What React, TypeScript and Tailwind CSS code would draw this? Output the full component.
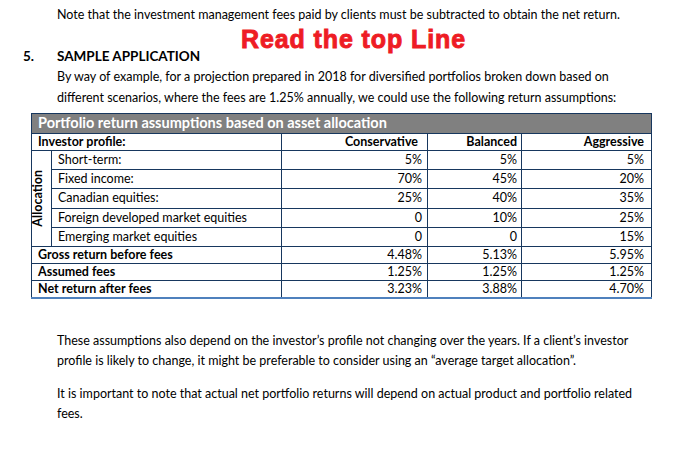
export default function App() {
  const alloc = [
    { label: 'Short-term:', c: '5%', b: '5%', a: '5%', h: 'h-[19px]' },
    { label: 'Fixed income:', c: '70%', b: '45%', a: '20%', h: 'h-[19px]' },
    { label: 'Canadian equities:', c: '25%', b: '40%', a: '35%', h: 'h-[20px]' },
    { label: 'Foreign developed market equities', c: '0', b: '10%', a: '25%', h: 'h-[19px]' },
    { label: 'Emerging market equities', c: '0', b: '0', a: '15%', h: 'h-[19px]' },
  ];

  const totals = [
    { label: 'Gross return before fees', c: '4.48%', b: '5.13%', a: '5.95%' },
    { label: 'Assumed fees', c: '1.25%', b: '1.25%', a: '1.25%' },
    { label: 'Net return after fees', c: '3.23%', b: '3.88%', a: '4.70%' },
  ];

  const cell = 'border border-[#17375e] p-0 leading-none';

  return (
    <div className="w-[677px] h-[460px] bg-white text-black font-['Lato',sans-serif] text-[12.5px] overflow-hidden">
      <p className="pl-[57px] pt-[5px] leading-[20px]">
        Note that the investment management fees paid by clients must be subtracted to obtain the net return.
      </p>

      {/* red annotation */}
      <div className="pl-[241px] mt-[2px] leading-[25px] text-[25px] font-bold tracking-[0.9px] text-[#ee1c24] [-webkit-text-stroke:0.9px_#ee1c24] font-['Liberation_Sans',Arial,sans-serif]">
        Read the top Line
      </div>

      <div className="flex items-center mt-[-3px] leading-[14px] text-[13.5px] font-bold">
        <span className="w-[57px] pl-[23px]">5.</span>
        <span>SAMPLE APPLICATION</span>
      </div>

      <p className="pl-[57px] pr-[40px] mt-[4px] leading-[20.5px]">
        By way of example, for a projection prepared in 2018 for diversified portfolios broken down based on
        different scenarios, where the fees are 1.25% annually, we could use the following return assumptions:
      </p>

      <div className="pl-[31px] mt-[5px]">
        <table className="table-fixed border-collapse w-[620px] border-b-2 border-b-[#4f81bd]">
          <colgroup>
            <col className="w-[20px]" />
            <col className="w-[230px]" />
            <col className="w-[146px]" />
            <col className="w-[94px]" />
            <col className="w-[130px]" />
          </colgroup>
          <tbody>
            <tr className="h-[20px]">
              <td colSpan={5} className={`${cell} bg-[#808080] text-white font-bold text-[14.5px] pl-[6px]`}>
                Portfolio return assumptions based on asset allocation
              </td>
            </tr>
            <tr className="h-[17px] font-bold">
              <td colSpan={2} className={`${cell} pl-[6px]`}>Investor profile:</td>
              <td className={`${cell} text-right pr-[9px]`}>Conservative</td>
              <td className={`${cell} text-right pr-[4px]`}>Balanced</td>
              <td className={`${cell} text-right pr-[7px]`}>Aggressive</td>
            </tr>
            {alloc.map((r, i) => (
              <tr key={i} className={r.h}>
                {i === 0 && (
                  <td rowSpan={5} className={`${cell} text-center align-middle`}>
                    <div className="mx-auto [writing-mode:vertical-rl] rotate-180 font-bold leading-none">Allocation</div>
                  </td>
                )}
                <td className={`${cell} pl-[6px]`}>{r.label}</td>
                <td className={`${cell} text-right pr-[5px]`}>{r.c}</td>
                <td className={`${cell} text-right pr-[4px]`}>{r.b}</td>
                <td className={`${cell} text-right pr-[7px]`}>{r.a}</td>
              </tr>
            ))}
            {totals.map((r, i) => (
              <tr key={i} className="h-[17px]">
                <td colSpan={2} className={`${cell} pl-[6px] font-bold`}>{r.label}</td>
                <td className={`${cell} text-right pr-[5px]`}>{r.c}</td>
                <td className={`${cell} text-right pr-[4px]`}>{r.b}</td>
                <td className={`${cell} text-right pr-[7px]`}>{r.a}</td>
              </tr>
            ))}
          </tbody>
        </table>
      </div>

      <p className="pl-[57px] pr-[40px] mt-[32px] leading-[20px]">
        These assumptions also depend on the investor’s profile not changing over the years. If a client’s investor
        profile is likely to change, it might be preferable to consider using an “average target allocation”.
      </p>

      <p className="pl-[57px] pr-[40px] mt-[13px] leading-[20px]">
        It is important to note that actual net portfolio returns will depend on actual product and portfolio related
        fees.
      </p>
    </div>
  );
}
